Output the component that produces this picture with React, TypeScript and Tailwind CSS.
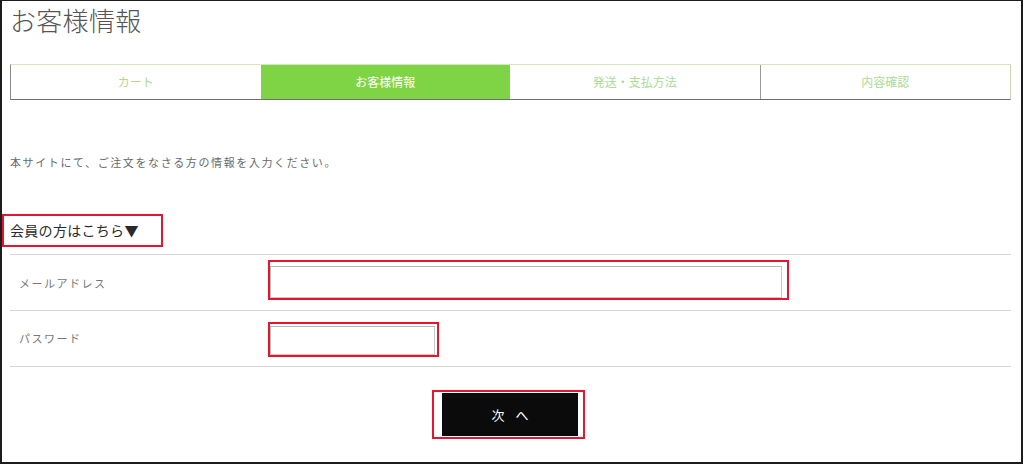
import React from "react";

const jp = { fontFamily: '"Noto Sans CJK JP", "Noto Sans", sans-serif' };

export default function App() {
  const steps = ["カート", "お客様情報", "発送・支払方法", "内容確認"];
  return (
    <div className="w-[1024px] h-[465px] bg-white overflow-hidden" style={jp}>
      <div className="w-[1023px] h-[464px] border-l-2 border-r-2 border-t border-b-2 border-[#1c1c1c] bg-white">
        <div className="pl-[8px] w-[1009px]">
          {/* Title */}
          <div className="mt-[3px] h-[32px] leading-[32px] text-[26px] tracking-[0.3px] font-light text-[#555]">
            お客様情報
          </div>

          {/* Step bar */}
          <div className="mt-[28px] h-[36px] w-[1001px] flex border-t border-t-[#d3e8bd] border-l border-l-[#8c8c8c] border-b border-b-[#6f6f6f] border-r border-r-[#c5d9b0]">
            {steps.map((s, i) => (
              <div
                key={s}
                className={
                  i === 1
                    ? "flex-1 flex items-center justify-center bg-[#7ed444] text-white text-[12px]"
                    : i === 2
                    ? "flex-1 flex items-center justify-center bg-white text-[#acdb93] text-[12px] border-r border-r-[#9a9a9a]"
                    : "flex-1 flex items-center justify-center bg-white text-[#acdb93] text-[12px]"
                }
              >
                {s}
              </div>
            ))}
          </div>

          {/* Description */}
          <div className="mt-[53px] h-[18px] leading-[18px] text-[11px] tracking-[1.6px] text-[#6a6a6a]">
            本サイトにて、ご注文をなさる方の情報を入力ください。
          </div>

          {/* Member link */}
          <div className="mt-[43px] -ml-[8px] w-[161px] h-[33px] border-2 border-[#e8142e] flex items-center pl-[6px] text-[14px] text-[#2a2a2a] tracking-[0.3px]">
            会員の方はこちら▼
          </div>

          {/* Table */}
          <div className="mt-[7px] w-[1001px] border-b border-[#d6d6d6]">
            <div className="h-[56px] border-t border-[#d6d6d6] flex">
              <div className="w-[258px] pl-[9px] self-center text-[11px] tracking-[1.5px] text-[#777] mt-[1px]">
                メールアドレス
              </div>
              <div className="pt-[5px]">
                <div className="w-[521px] h-[40px] border-2 border-[#e8142e] pt-[4px]">
                  <div className="w-[512px] h-[32px] border border-[#c9c9c9] border-t-[#b5b5b5] border-l-[#bdbdbd] bg-white" />
                </div>
              </div>
            </div>
            <div className="h-[56px] border-t border-[#d6d6d6] flex">
              <div className="w-[258px] pl-[9px] self-center text-[11px] tracking-[1.5px] text-[#777]">
                パスワード
              </div>
              <div className="pt-[11px]">
                <div className="w-[171px] h-[35px] border-2 border-[#e8142e] pt-[2px]">
                  <div className="w-[165px] h-[29px] border border-[#c9c9c9] border-t-[#b5b5b5] border-l-[#bdbdbd] bg-white" />
                </div>
              </div>
            </div>
          </div>

          {/* Button */}
          <div className="mt-[23px] w-[1001px] flex justify-center pr-[4px]">
            <div className="w-[153px] h-[49px] border-2 border-[#e8142e] pl-[8px] pr-[5px] py-[1px]">
              <div className="w-full h-full bg-[#0b0b0b] flex items-center justify-center text-white text-[13px] tracking-[11px] pl-[11px]">
                次へ
              </div>
            </div>
          </div>
        </div>
      </div>
    </div>
  );
}
